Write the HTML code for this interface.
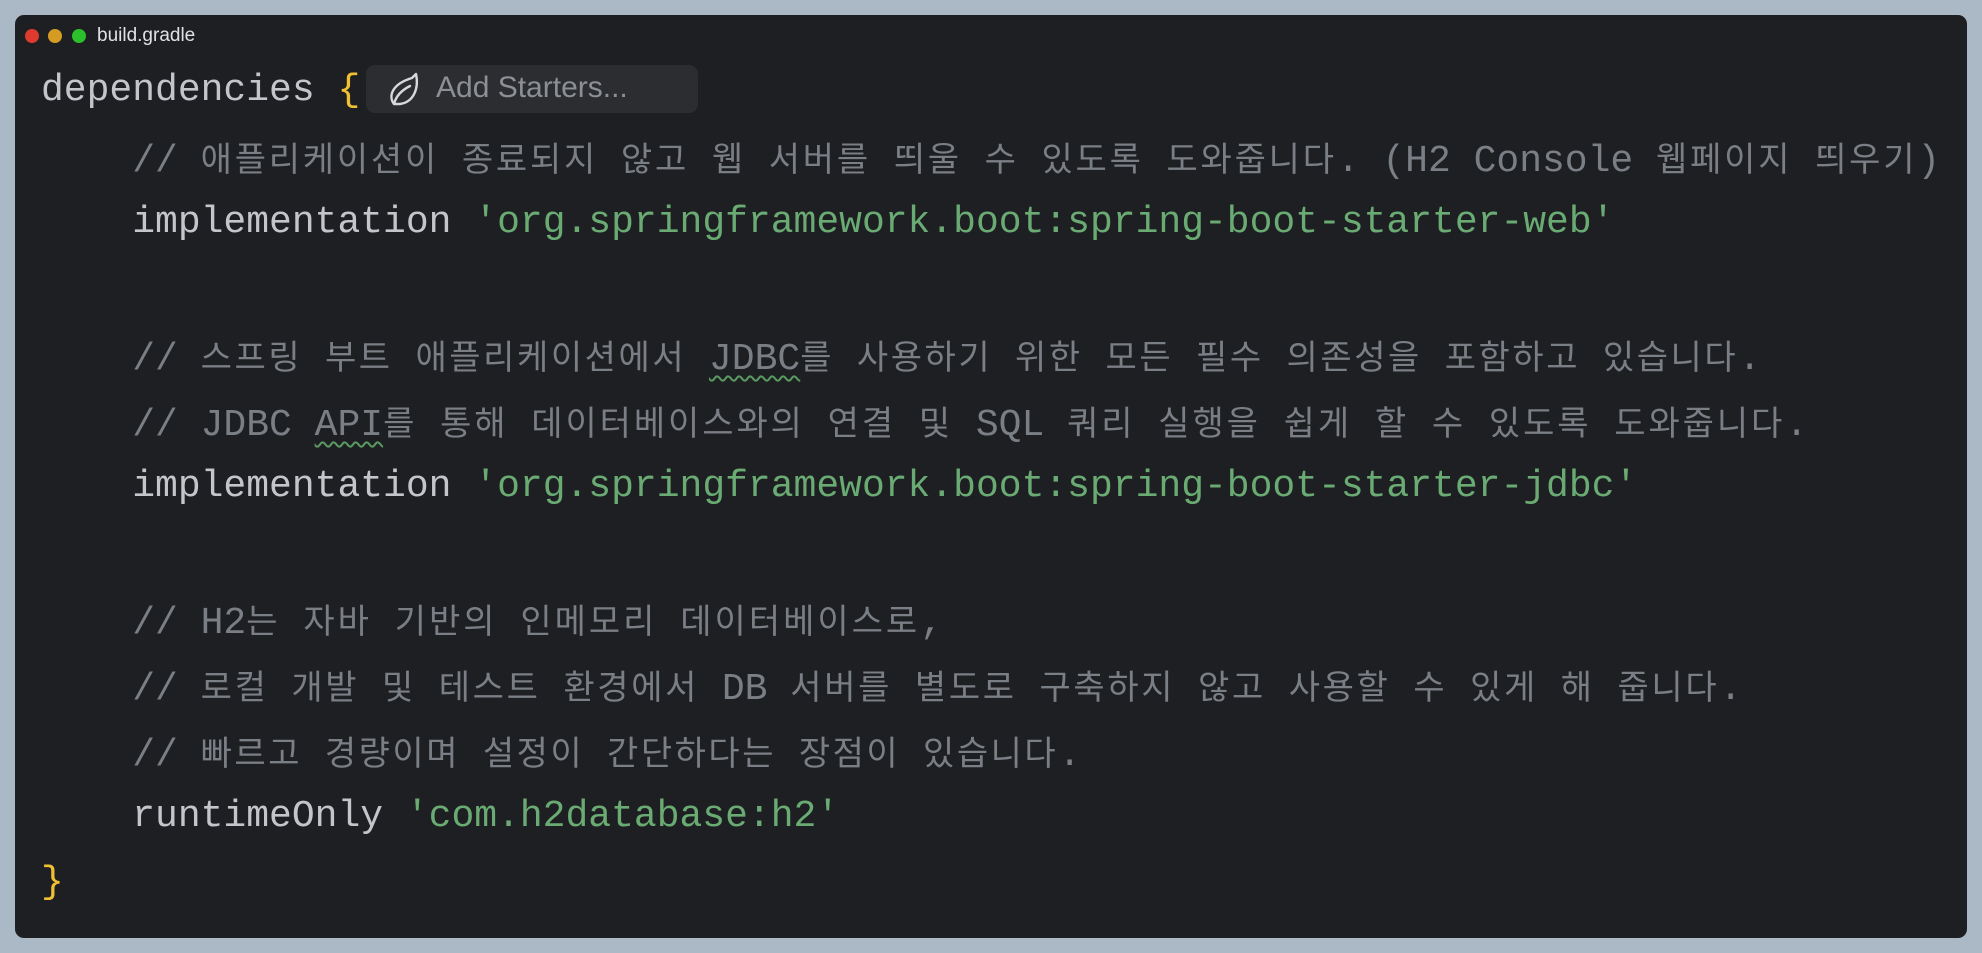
<!DOCTYPE html>
<html><head><meta charset="utf-8"><style>
html,body{margin:0;padding:0;width:1982px;height:953px;background:#abb8c5;overflow:hidden}
.win{position:absolute;left:15px;top:15px;width:1952px;height:923px;background:#1e1f22;border-radius:9px}
.dot{position:absolute;top:14px;width:14px;height:14px;border-radius:50%}
.title{position:absolute;left:82px;top:10px;font:19px "Liberation Sans",sans-serif;color:#dfe1e5}
.code{position:absolute;left:41px;top:58px;font:38px/66px "Liberation Mono","Noto Sans CJK KR",monospace;color:#c3c5cb;white-space:normal}
.l{height:66px;white-space:pre}
.c{color:#7a7e85}
.s{color:#6aab73}
.b{color:#f0c032}
.k{font-family:"Noto Sans CJK KR",sans-serif;font-size:34px}
.w{text-decoration:underline wavy #5a9a62;text-decoration-thickness:2px;text-underline-offset:6px}
.pill{position:absolute;left:366px;top:65px;width:332px;height:48px;background:#2b2d31;border-radius:9px}
.pill span{position:absolute;left:70px;top:6px;font:30px "Liberation Sans",sans-serif;color:#8c8f94}
</style></head><body>
<div class="win">
<div class="dot" style="left:10px;background:#dc3b2e"></div>
<div class="dot" style="left:33px;background:#d49c22"></div>
<div class="dot" style="left:57px;background:#2bbf2c"></div>
<div class="title">build.gradle</div>
</div>
<div class="code"><div class="l">dependencies <span class="b">{</span></div><div class="l c" id="a1">    // 애플리케이션이 종료되지 않고 웹 서버를 띄울 수 있도록 도와줍니다. (H2 Console 웹페이지 띄우기)</div><div class="l">    implementation <span class="s">'org.springframework.boot:spring-boot-starter-web'</span></div><div class="l"> </div><div class="l c" id="a2">    // 스프링 부트 애플리케이션에서 <span class="w">JDBC</span>를 사용하기 위한 모든 필수 의존성을 포함하고 있습니다.</div><div class="l c" id="a3">    // JDBC <span class="w">API</span>를 통해 데이터베이스와의 연결 및 SQL 쿼리 실행을 쉽게 할 수 있도록 도와줍니다.</div><div class="l">    implementation <span class="s">'org.springframework.boot:spring-boot-starter-jdbc'</span></div><div class="l"> </div><div class="l c" id="a4">    // H2는 자바 기반의 인메모리 데이터베이스로,</div><div class="l c" id="a5">    // 로컬 개발 및 테스트 환경에서 DB 서버를 별도로 구축하지 않고 사용할 수 있게 해 줍니다.</div><div class="l c" id="a6">    // 빠르고 경량이며 설정이 간단하다는 장점이 있습니다.</div><div class="l">    runtimeOnly <span class="s">'com.h2database:h2'</span></div><div class="l"><span class="b">}</span></div></div>
<div class="pill">
<svg style="position:absolute;left:20px;top:7px" width="36" height="36" viewBox="0 0 36 36"><path d="M8 32 C2 24 6 12 26 6 C28 4 29 3 30 2 C33 16 28 30 14 32 C12 32 10 32 8 32 Z M8 32 C10 24 16 18 24 14" fill="none" stroke="#d6d8dc" stroke-width="2.4" stroke-linecap="round" stroke-linejoin="round"/></svg>
<span>Add Starters...</span>
</div>
<script>
var T={a1:1940,a2:1761,a3:1808,a4:943,a5:1742,a6:1081};
for(var id in T){var el=document.getElementById(id);
 var walker=document.createTreeWalker(el,NodeFilter.SHOW_TEXT,null,false),nodes=[],n;
 while(n=walker.nextNode())nodes.push(n);
 var kc=0;
 nodes.forEach(function(t){var parts=t.nodeValue.split(/([\uAC00-\uD7A3]+)/);if(parts.length<2)return;
  var f=document.createDocumentFragment();
  parts.forEach(function(p){if(!p)return;if(/[\uAC00-\uD7A3]/.test(p)){var s=document.createElement('span');s.className='k';s.textContent=p;kc+=p.length;f.appendChild(s);}else f.appendChild(document.createTextNode(p));});
  t.parentNode.replaceChild(f,t);});
 var r=document.createRange();r.selectNodeContents(el);var w=r.getBoundingClientRect().right;
 var ls=(T[id]-w)/kc;
 el.querySelectorAll('.k').forEach(function(s){s.style.letterSpacing=ls+'px';});
}
</script>
</body></html>
